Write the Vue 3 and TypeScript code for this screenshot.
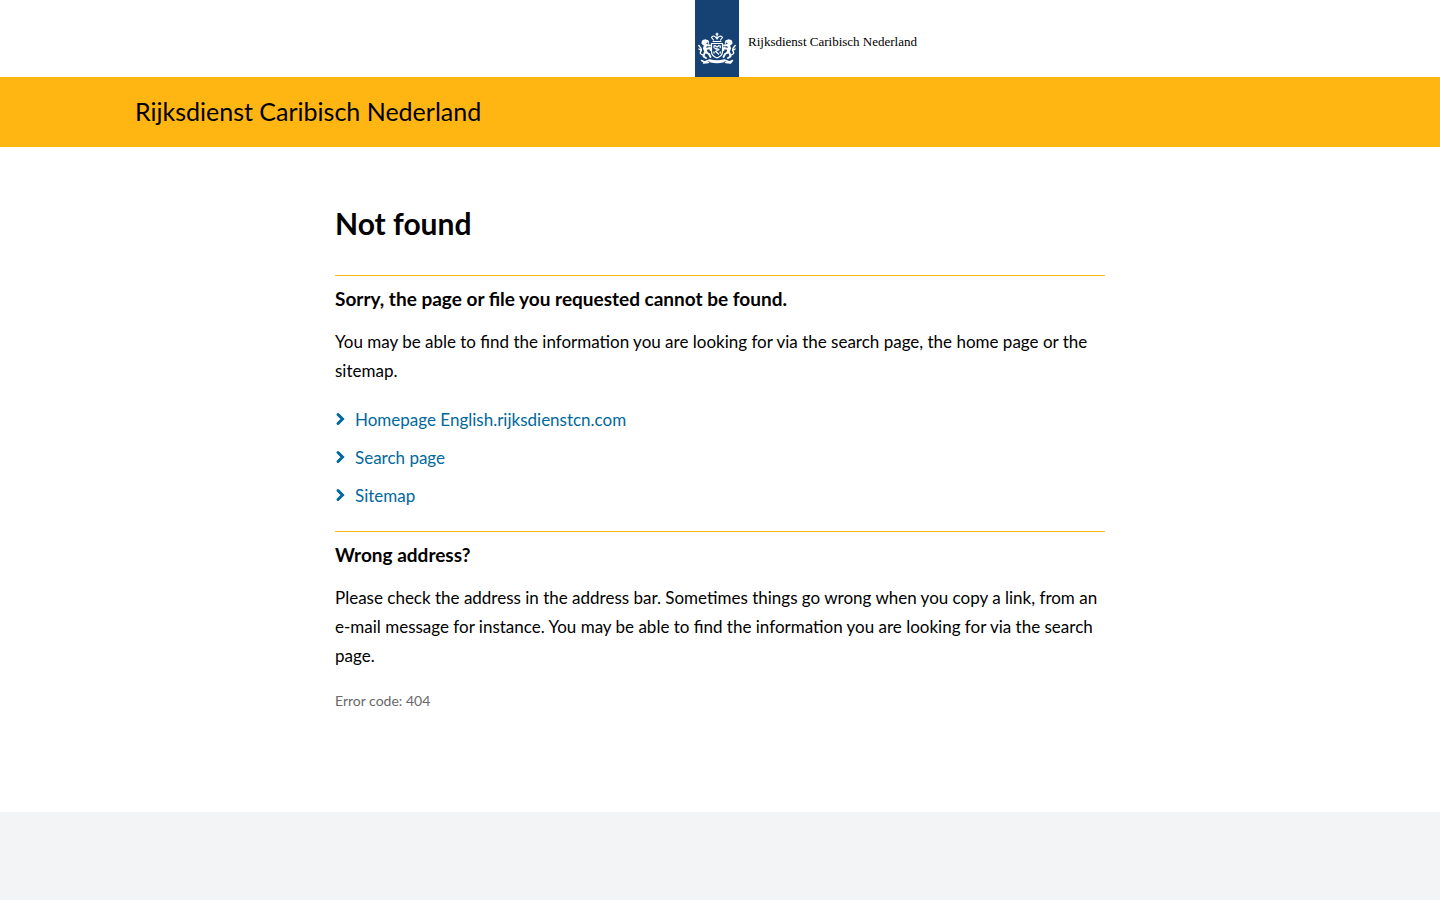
<script setup lang="ts">
interface PageLink {
  label: string
  href: string
}

const links: PageLink[] = [
  { label: 'Homepage English.rijksdienstcn.com', href: '#home' },
  { label: 'Search page', href: '#search' },
  { label: 'Sitemap', href: '#sitemap' },
]
</script>

<template>
  <div class="page">
    <header>
      <a class="logo" href="#home">
        <span class="ribbon">
          <svg class="crest" viewBox="0 0 38 33" aria-hidden="true">
            <g fill="none" stroke="#fff" stroke-linecap="round" stroke-linejoin="round">
              <path d="M15 9.500h8M15.500 8L13.500 5.500Q14.500 3.500 17 4.500L19 7L21 4.500Q23.500 3.500 24.500 5.500L22.500 8M19 1v6M18 2.200h2" stroke-width="1.200" />
              <path d="M13.500 11.500h11v8q0 4.500-5.500 6.500q-5.500-2-5.500-6.500z" stroke-width="1.200" />
              <path d="M17 13.500l2 1.500 2-1.500M17 16.500l4 1-3.500 2 3 2.500M16 14v1.500M22.200 14v1.500M16 20v1M22.200 20v1" stroke-width="1.300" />
              <g id="lion">
                <path d="M8 10q-3-2-3 1l2.500 2-1 3.500 1.500 3.500" stroke-width="3" />
                <path d="M8 13l4 .5M8 17l4-1 .5 2M7.500 20l3.500 2 1.500 3M6.500 21l-1 3.500 2.500 1.500" stroke-width="1.900" />
                <path d="M5 23Q1 22 3 19Q4 17 2 15L.8 13.500M2.500 18l-1.500-1M7 8l3 1 .5 2" stroke-width="1.400" />
              </g>
              <use href="#lion" transform="matrix(-1 0 0 1 38 0)" />
              <path d="M3.500 28.500l3 1.500 5-2q7.500 2 15 0l5 2 3-1.500-2 2.500-5-.5M5.500 31l5-.5M12 29.500q7 2 14 0" stroke-width="1.500" />
            </g>
          </svg>
        </span>
        <span class="wordmark">Rijksdienst Caribisch Nederland</span>
      </a>
      <div class="titlebar">
        <p class="site-title">Rijksdienst Caribisch Nederland</p>
      </div>
    </header>

    <main>
      <h1>Not found</h1>
      <section>
        <h2>Sorry, the page or file you requested cannot be found.</h2>
        <p>You may be able to find the information you are looking for via the search page, the home page or the sitemap.</p>
        <ul>
          <li v-for="link in links" :key="link.href">
            <a :href="link.href">
              <svg class="chevron" viewBox="0 0 10 14" aria-hidden="true">
                <path d="M3 2.500L7.500 7L3 11.500" fill="none" stroke="currentColor" stroke-width="3" stroke-linecap="round" />
              </svg>
              <span>{{ link.label }}</span>
            </a>
          </li>
        </ul>
      </section>
      <section>
        <h2>Wrong address?</h2>
        <p>Please check the address in the address bar. Sometimes things go wrong when you copy a link, from an e-mail message for instance. You may be able to find the information you are looking for via the search page.</p>
        <p class="code">Error code: 404</p>
      </section>
    </main>
    <footer></footer>
  </div>
</template>

<style>
body {
  margin: 0;
}
</style>

<style scoped>
.page {
  display: flex;
  flex-direction: column;
  min-height: 100vh;
  color: #000;
  background: #fff;
  font-family: Lato, "Noto Sans", sans-serif;
  font-size: 17px;
  line-height: 29px;
}

.logo {
  display: flex;
  width: fit-content;
  margin-left: calc(50% - 25px);
  color: #000;
  text-decoration: none;
}

.ribbon {
  box-sizing: border-box;
  width: 44px;
  height: 77px;
  padding: 32px 3px 0;
  background: #154273;
}

.crest {
  display: block;
  width: 38px;
  height: 33px;
}

.wordmark {
  padding: 32px 0 0 9px;
  font-family: "Liberation Serif", serif;
  font-size: 13px;
  line-height: 20px;
}

.titlebar {
  background: #ffb612;
}

.site-title {
  box-sizing: border-box;
  max-width: 1170px;
  margin: 0 auto;
  padding: 17px 0 19px;
  font-size: 25px;
  line-height: 34px;
}

main {
  box-sizing: border-box;
  width: 100%;
  max-width: 770px;
  margin: 0 auto;
  padding: 56px 0 97px;
}

h1 {
  margin: 0 0 32px;
  font-size: 30px;
  line-height: 40px;
}

section {
  border-top: 1px solid #ffb612;
  padding-top: 8px;
}

h2 {
  margin: 0 0 13px;
  font-size: 19px;
  line-height: 30px;
}

p {
  margin: 0;
}

ul {
  margin: 20px 0 0;
  padding: 0 0 21px;
  list-style: none;
}

li + li {
  margin-top: 9px;
}

li a {
  display: inline-flex;
  align-items: center;
  gap: 10px;
  color: #01689b;
  text-decoration: none;
  vertical-align: top;
}

.chevron {
  width: 10px;
  height: 14px;
  margin-bottom: 1px;
}

.code {
  margin-top: 16px;
  color: #696969;
  font-size: 14px;
}

footer {
  flex: 1;
  background: #f3f4f6;
}
</style>
